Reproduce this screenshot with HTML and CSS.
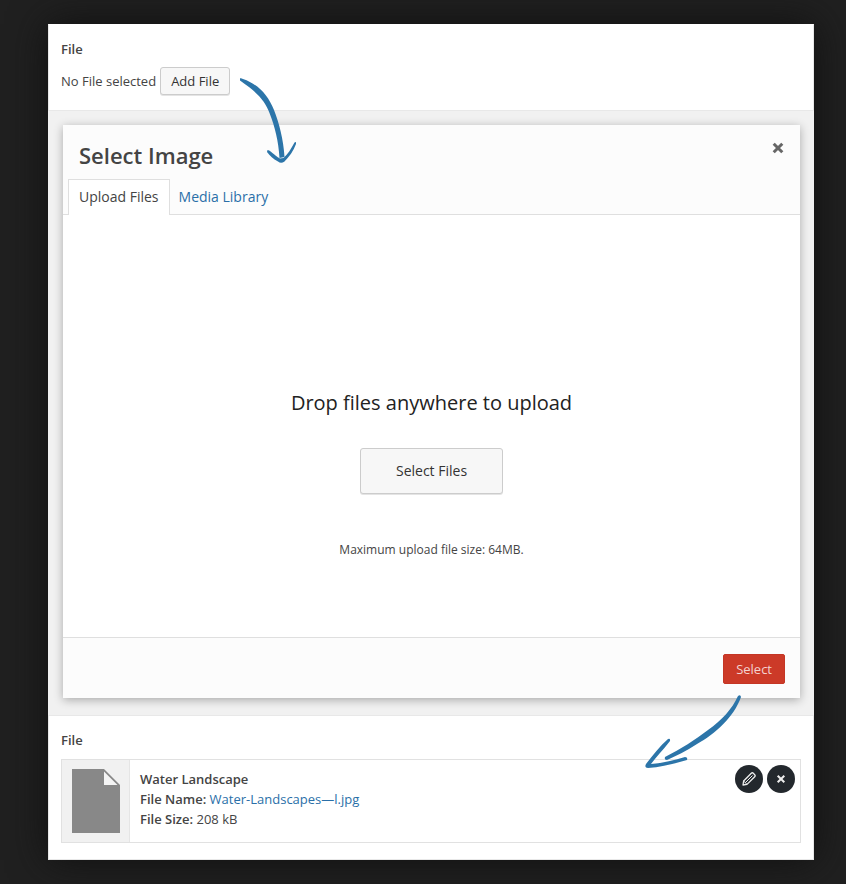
FILE: index.html
```html
<!DOCTYPE html>
<html lang="en">
<head>
<meta charset="utf-8">
<title>File field</title>
<link rel="stylesheet" href="styles.css">
</head>
<body>
<main class="sheet">
  <section class="field">
    <h2 class="field-label">File</h2>
    <div class="empty-row">
      <span>No File selected</span>
      <button class="button" type="button">Add File</button>
    </div>
    <svg class="arrow arrow-down" width="60" height="90" viewBox="0 0 60 90" aria-hidden="true">
      <path d="M4 3.300Q5.500 3 7 4C22 9 32 20 38 35C43 48 47.500 64 48.500 82L43.500 83C42.500 66 39 52 33.500 38C29 26 22 18 4 5.500Z"/>
      <path d="M31.500 75C34 75 38 80 44 83.500L47.500 83C52 79 55 74 58.500 67.500Q60.500 66 60 69C57.500 76 53 82 48.500 86.500Q45 89 42 86.500C37 84 34 81 31 77Z"/>
    </svg>
  </section>

  <div class="backdrop">
    <section class="modal" aria-labelledby="modal-title">
      <header class="modal-head">
        <div class="title-row">
          <h1 class="modal-title" id="modal-title">Select Image</h1>
          <button class="close" type="button" aria-label="Close">
            <svg width="12" height="12" viewBox="0 0 12 12" aria-hidden="true"><path d="M1.700 1.700L10.300 10.300M10.300 1.700L1.700 10.300"/></svg>
          </button>
        </div>
        <nav class="tabs">
          <a class="tab tab-active" href="#upload">Upload Files</a>
          <a class="tab" href="#library">Media Library</a>
        </nav>
      </header>
      <div class="dropzone" id="upload">
        <p class="drop-title">Drop files anywhere to upload</p>
        <button class="button button-hero" type="button">Select Files</button>
        <p class="drop-note">Maximum upload file size: 64MB.</p>
      </div>
      <footer class="modal-foot">
        <button class="button-primary" type="button">Select</button>
      </footer>
    </section>
  </div>

  <section class="field field-last">
    <h2 class="field-label">File</h2>
    <div class="file-card">
      <div class="thumb">
        <svg width="48" height="64" viewBox="0 0 48 64" aria-hidden="true"><path fill="#888" d="M0 0H32L48 16V64H0Z"/><path fill="#f4f4f4" d="M32 2.500L45.500 16H32Z"/></svg>
      </div>
      <div class="info">
        <strong>Water Landscape</strong>
        <span><strong>File Name:</strong> <a href="#file">Water-Landscapes—l.jpg</a></span>
        <span><strong>File Size:</strong> 208 kB</span>
      </div>
      <div class="actions">
        <button class="round" type="button" aria-label="Edit">
          <svg width="16" height="16" viewBox="0 0 16 16" fill="none" stroke="#eee" stroke-width="1.300" stroke-linejoin="round" aria-hidden="true"><path d="M2 14L2.600 10L10.300 2.300Q11.300 1.300 12.300 2.300L13.700 3.700Q14.700 4.700 13.700 5.700L6 13.400Z"/><path stroke-width="1" d="M4.300 11.700L11.500 4.500M2.600 10L6 13.400"/></svg>
        </button>
        <button class="round" type="button" aria-label="Remove">
          <svg width="10" height="10" viewBox="0 0 10 10" fill="none" stroke="#eee" stroke-width="2" aria-hidden="true"><path d="M1.700 1.700L8.300 8.300M8.300 1.700L1.700 8.300"/></svg>
        </button>
      </div>
    </div>
    <svg class="arrow arrow-left" width="100" height="80" viewBox="0 0 100 80" aria-hidden="true">
      <path d="M94 2Q96.500 0 97 3C90 23 71 40 53 50C42 57 32 62 23 66Q20 66 21 63C37 55 51 46 64 36C78 26 88 15 94 2Z"/>
      <path d="M24 45Q26.500 44 26 47C19 56 12 63 7 70C19 69 31 66 41 63Q44 63 43 66C30 70 17 73 4 74Q0 74 2 70C9 61 16 52 24 45Z"/>
    </svg>
  </section>
</main>
</body>
</html>
```
FILE: styles.css
```css
* {
  box-sizing: border-box;
}

body {
  margin: 0;
  padding: 24px 32px 24px 48px;
  background: #202020;
  color: #444;
  font: 13px/20px "Open Sans", sans-serif;
}

h1, h2, p {
  margin: 0;
}

a {
  color: #2a6fa8;
  text-decoration: none;
}

button {
  font: inherit;
  cursor: pointer;
}

strong {
  font-weight: 600;
}

.sheet {
  background: #f1f1f1;
  box-shadow: 0 0 36px #101010;
}

.field {
  position: relative;
  padding: 14px 12px 15px;
  background: #fff;
  border: 1px solid #e8e8e8;
  border-top-color: #fff;
}

.field-last {
  padding-bottom: 16px;
  border-top-color: #e8e8e8;
}

.field-label {
  font-size: 13px;
  line-height: 20px;
  font-weight: 600;
}

.empty-row {
  display: flex;
  align-items: center;
  gap: 4px;
  margin-top: 8px;
}

.button {
  height: 28px;
  padding: 0 10px;
  background: #f7f7f7;
  border: 1px solid #ccc;
  border-radius: 3px;
  box-shadow: 0 1px 0 #e4e4e4;
  color: #333;
}

.arrow {
  position: absolute;
  z-index: 2;
  fill: #2c75a9;
  pointer-events: none;
}

.arrow-down {
  top: 50px;
  left: 187px;
}

.arrow-left {
  top: -22px;
  right: 69px;
}

.backdrop {
  padding: 14px 14px 17px 15px;
}

.modal {
  background: #fff;
  box-shadow: 0 2px 9px rgba(0, 0, 0, 0.3);
}

.modal-head {
  background: #fcfcfc;
  border-bottom: 1px solid #dfdfdf;
}

.title-row {
  display: flex;
  justify-content: space-between;
  align-items: flex-start;
  padding: 14px 16px 8px;
}

.modal-title {
  font-size: 22px;
  line-height: 32px;
  font-weight: 600;
}

.close {
  display: grid;
  padding: 3px 0;
  background: none;
  border: 0;
}

.close path {
  fill: none;
  stroke: #666;
  stroke-width: 3;
}

.tabs {
  display: flex;
  padding-left: 5px;
  margin-bottom: -1px;
}

.tab {
  padding: 7px 8px 8px;
  border: 1px solid transparent;
  border-bottom: 0;
  font-size: 14px;
}

.tab-active {
  padding: 7px 10px 8px;
  background: #fff;
  border-color: #dfdfdf;
  color: #444;
}

.dropzone {
  display: flex;
  flex-direction: column;
  align-items: center;
  padding: 174px 16px 77px;
}

.drop-title {
  color: #222;
  font-size: 20px;
  line-height: 28px;
}

.button-hero {
  height: 46px;
  margin: 31px 0 46px;
  padding: 0 35px;
  font-size: 14px;
}

.drop-note {
  font-size: 12px;
}

.modal-foot {
  display: flex;
  justify-content: flex-end;
  padding: 16px 15px 14px;
  background: #fcfcfc;
  border-top: 1px solid #dfdfdf;
}

.button-primary {
  height: 30px;
  padding: 0 12px;
  background: #cc3a28;
  border: 1px solid #c43625;
  border-radius: 2px;
  color: #f3d2d0;
}

.file-card {
  display: flex;
  min-height: 84px;
  margin-top: 9px;
  border: 1px solid #e1e1e1;
}

.thumb {
  display: grid;
  place-items: center;
  width: 68px;
  background: #f1f1f1;
  border-right: 1px solid #e5e5e5;
}

.info {
  display: flex;
  flex: 1;
  flex-direction: column;
  padding: 9px 10px;
}

.actions {
  display: flex;
  gap: 4px;
  padding: 5px;
}

.round {
  display: grid;
  place-items: center;
  width: 28px;
  height: 28px;
  padding: 0;
  background: #23282d;
  border: 0;
  border-radius: 50%;
}
```
